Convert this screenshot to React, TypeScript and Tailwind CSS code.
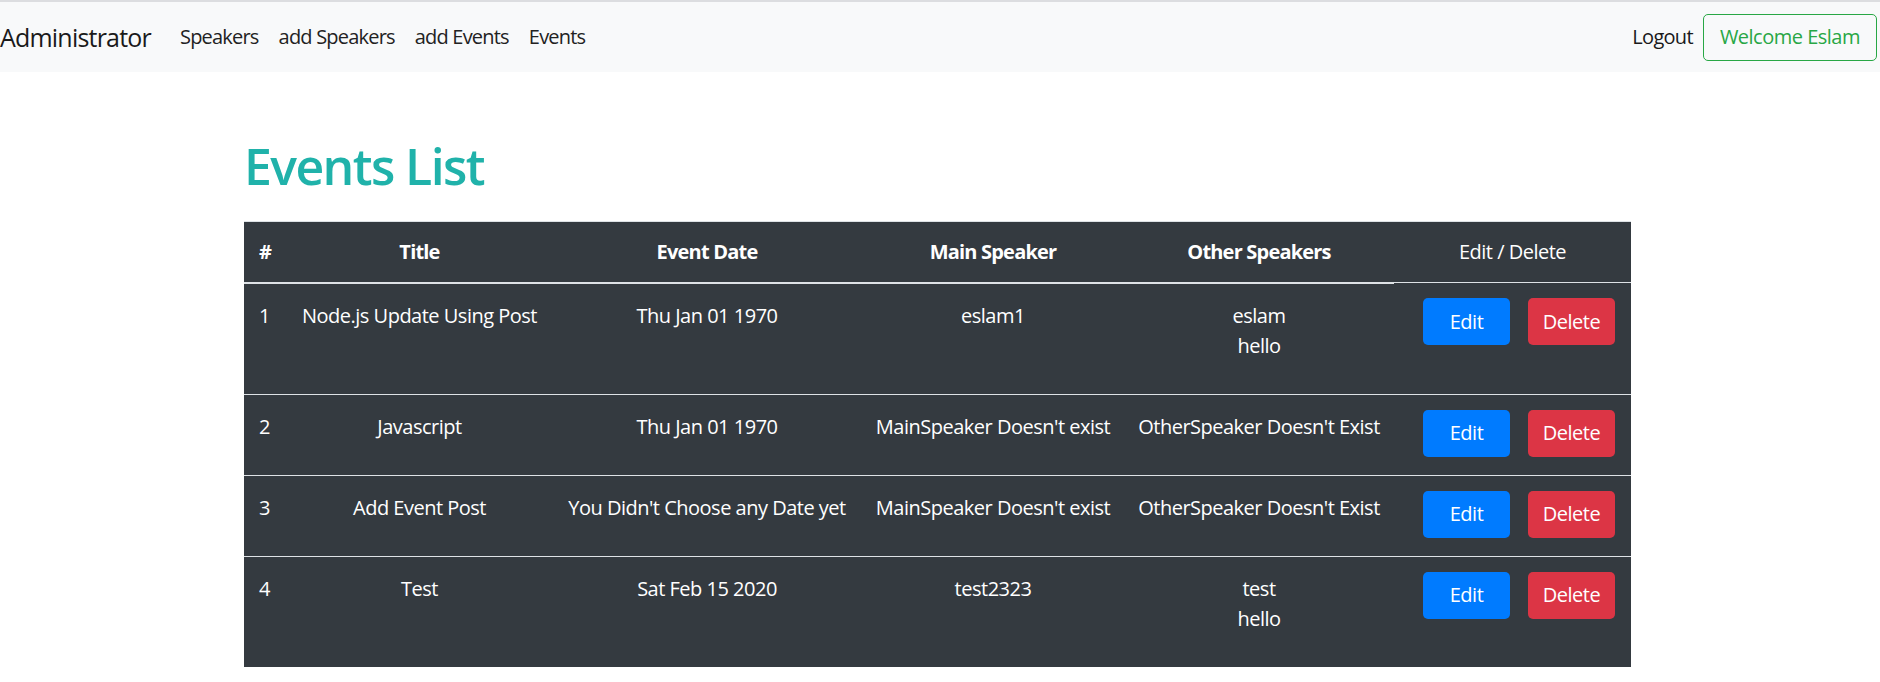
const events = [
  { id: 1, title: 'Node.js Update Using Post', date: 'Thu Jan 01 1970', main: 'eslam1', others: ['eslam', 'hello'] },
  { id: 2, title: 'Javascript', date: 'Thu Jan 01 1970', main: "MainSpeaker Doesn't exist", others: ["OtherSpeaker Doesn't Exist"] },
  { id: 3, title: 'Add Event Post', date: "You Didn't Choose any Date yet", main: "MainSpeaker Doesn't exist", others: ["OtherSpeaker Doesn't Exist"] },
  { id: 4, title: 'Test', date: 'Sat Feb 15 2020', main: 'test2323', others: ['test', 'hello'] },
];

const links = ['Speakers', 'add Speakers', 'add Events', 'Events'];

const App = () => {
  return (
    <div className="min-h-screen bg-white font-['Open_Sans',sans-serif] text-[20px] leading-[30px] tracking-[-0.5px] text-[#212529]">
      <nav className="flex h-[72px] items-center justify-between border-t-2 border-[#dcdde0] bg-[#f8f9fa]">
        <div className="flex items-center">
          <a className="w-[170px] text-[25px] leading-[38px] tracking-[-0.8px] text-[#1a1a1a]">Administrator</a>
          <ul className="flex">
            {links.map((l) => (
              <li key={l}>
                <a className="px-[10px] tracking-[-0.8px] text-[#222]">{l}</a>
              </li>
            ))}
          </ul>
        </div>
        <div className="flex items-center pr-[3px]">
          <a className="tracking-[-0.7px] text-[#1a1a1a]">Logout</a>
          <button className="ml-[10px] h-[47px] rounded-[5px] border border-[#28a745] px-[16px] text-[#28a745]">
            Welcome Eslam
          </button>
        </div>
      </nav>

      <div className="ml-[244px] w-[1387px]">
        <h1 className="mt-[64px] mb-[25px] text-[50px] font-semibold leading-[60px] tracking-[-1.6px] text-[#20b2aa]">Events List</h1>

        <table className="w-full table-fixed border-collapse bg-[#343a40] text-white">
          <colgroup>
            <col className="w-[43px]" />
            <col className="w-[265px]" />
            <col className="w-[310px]" />
            <col className="w-[262px]" />
            <col className="w-[270px]" />
            <col className="w-[237px]" />
          </colgroup>
          <thead>
            <tr>
              <th className="border-t border-b-2 border-[#dee2e6] pt-[15px] pb-[14px] pl-[15px] text-left font-bold tracking-[-0.8px]">#</th>
              <th className="border-t border-b-2 border-[#dee2e6] pt-[15px] pb-[14px] text-center font-bold tracking-[-0.8px]">Title</th>
              <th className="border-t border-b-2 border-[#dee2e6] pt-[15px] pb-[14px] text-center font-bold tracking-[-0.8px]">Event Date</th>
              <th className="border-t border-b-2 border-[#dee2e6] pt-[15px] pb-[14px] text-center font-bold tracking-[-0.8px]">Main Speaker</th>
              <th className="border-t border-b-2 border-[#dee2e6] pt-[15px] pb-[14px] text-center font-bold tracking-[-0.8px]">Other Speakers</th>
              <th className="border-t border-b border-[#dee2e6] pt-[15px] pb-[15px] text-center font-normal">Edit / Delete</th>
            </tr>
          </thead>
          <tbody>
            {events.map((e) => (
              <tr key={e.id}>
                <td className="border-t border-[#dee2e6] pt-[17px] pb-[13px] pl-[15px] align-top">{e.id}</td>
                <td className="border-t border-[#dee2e6] pt-[17px] pb-[13px] text-center align-top whitespace-nowrap">{e.title}</td>
                <td className="border-t border-[#dee2e6] pt-[17px] pb-[13px] text-center align-top whitespace-nowrap">{e.date}</td>
                <td className="border-t border-[#dee2e6] pt-[17px] pb-[13px] text-center align-top whitespace-nowrap">{e.main}</td>
                <td className="border-t border-[#dee2e6] pt-[17px] pb-[13px] text-center align-top whitespace-nowrap">
                  <div className="mb-[20px]">
                    {e.others.map((o) => (
                      <div key={o}>{o}</div>
                    ))}
                  </div>
                </td>
                <td className="border-t border-[#dee2e6] py-[15px] pl-[29px] align-top">
                  <div className="flex gap-[18px]">
                    <button className="h-[47px] w-[87px] rounded-[5px] bg-[#007bff] text-white">Edit</button>
                    <button className="h-[47px] w-[87px] rounded-[5px] bg-[#dc3545] text-white">Delete</button>
                  </div>
                </td>
              </tr>
            ))}
          </tbody>
        </table>
      </div>
    </div>
  );
};

export default App;
